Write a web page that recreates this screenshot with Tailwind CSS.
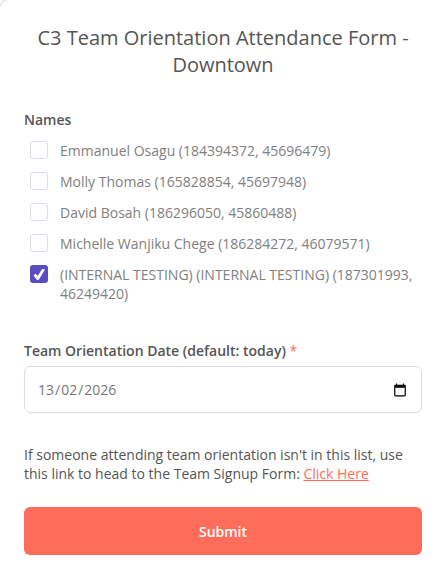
<!DOCTYPE html>
<html lang="en-GB">
<head>
<meta charset="utf-8">
<meta name="viewport" content="width=device-width, initial-scale=1">
<title>C3 Team Orientation Attendance Form - Downtown</title>
<script src="https://cdn.jsdelivr.net/npm/@tailwindcss/browser@4"></script>
</head>
<body class="bg-white font-['Open_Sans',sans-serif] text-sm leading-[19px] text-[#555555]">
<main class="-ml-px -mt-px min-h-screen rounded-tl-[10px] border-l border-t border-[#dcdce8] bg-white pt-6 pr-[18px] pb-5 pl-6">
  <h1 class="text-center text-xl leading-[27px]">C3 Team Orientation Attendance Form - Downtown</h1>
  <form class="mt-8">
    <fieldset>
      <legend class="font-semibold">Names</legend>
      <div class="mt-3 flex flex-col gap-3 pl-1.5 text-[#808080]">
        <label class="flex items-start gap-3">
          <input type="checkbox" class="size-[18px] shrink-0 appearance-none rounded-[3px] border border-[#dcdce8]">
          <span>Emmanuel Osagu (184394372, 45696479)</span>
        </label>
        <label class="flex items-start gap-3">
          <input type="checkbox" class="size-[18px] shrink-0 appearance-none rounded-[3px] border border-[#dcdce8]">
          <span>Molly Thomas (165828854, 45697948)</span>
        </label>
        <label class="flex items-start gap-3">
          <input type="checkbox" class="size-[18px] shrink-0 appearance-none rounded-[3px] border border-[#dcdce8]">
          <span>David Bosah (186296050, 45860488)</span>
        </label>
        <label class="flex items-start gap-3">
          <input type="checkbox" class="size-[18px] shrink-0 appearance-none rounded-[3px] border border-[#dcdce8]">
          <span>Michelle Wanjiku Chege (186284272, 46079571)</span>
        </label>
        <label class="flex items-start gap-3">
          <span class="grid size-[18px] shrink-0">
            <input type="checkbox" checked class="col-start-1 row-start-1 size-[18px] appearance-none rounded-[3px] bg-[#5a4cc2]">
            <svg class="pointer-events-none col-start-1 row-start-1 size-[18px]" viewBox="0 0 18 18" aria-hidden="true"><path d="M3.4 10.2 5.7 8.8 7.6 11 12.2 4 15 4.4 8.8 14.8 7 15Z" fill="#fff"/></svg>
          </span>
          <span>(INTERNAL TESTING) (INTERNAL TESTING) (187301993, 46249420)</span>
        </label>
      </div>
    </fieldset>
    <label id="date-label" for="day" class="mt-[38px] block font-semibold">Team Orientation Date (default: today) <span class="font-normal text-[#ff6d5a]">*</span></label>
    <div role="group" aria-labelledby="date-label" class="mt-1.5 flex h-[47px] items-center rounded-md border border-[#dcdce8] pr-3.5 pl-3 text-[#777777]">
      <input id="day" type="text" inputmode="numeric" maxlength="2" value="13" class="w-[18px] text-center outline-none">
      <span>/</span>
      <input type="text" inputmode="numeric" maxlength="2" value="02" aria-label="Month" class="w-[18px] text-center outline-none">
      <span>/</span>
      <input type="text" inputmode="numeric" maxlength="4" value="2026" aria-label="Year" class="w-[34px] text-center outline-none">
      <button type="button" aria-label="Choose date" class="ml-auto text-black">
        <svg class="size-3.5" viewBox="0 0 24 24" fill="currentColor" aria-hidden="true"><path d="M20 3h-1V1h-2v2H7V1H5v2H4c-1.1 0-2 .9-2 2v16c0 1.1.9 2 2 2h16c1.1 0 2-.9 2-2V5c0-1.1-.9-2-2-2zm0 18H4V8h16v13z"/></svg>
      </button>
    </div>
    <p class="mt-8">If someone attending team orientation isn't in this list, use this link to head to the Team Signup Form: <a href="#" class="text-[#ff6d5a] underline">Click Here</a></p>
    <button type="submit" class="mt-6 h-12 w-full rounded-md bg-[#ff6d5a] font-semibold text-white">Submit</button>
  </form>
</main>
</body>
</html>
